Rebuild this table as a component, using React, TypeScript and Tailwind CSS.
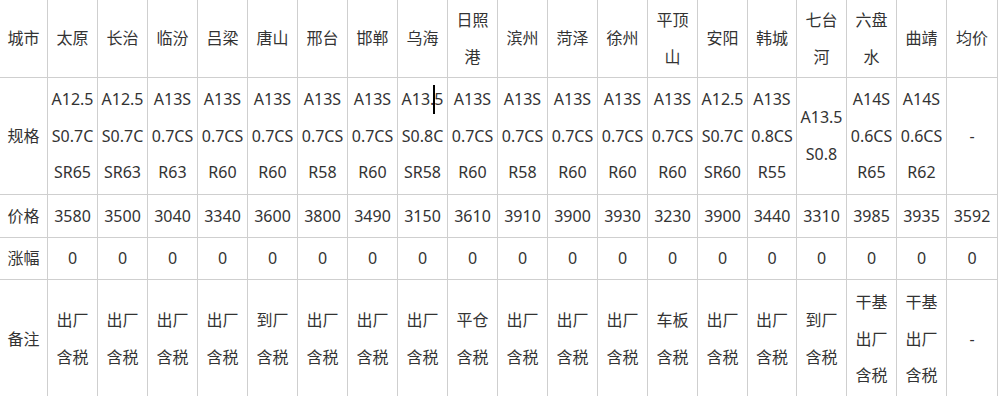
import React from "react";

type Cell = React.ReactNode;

const cities: string[][] = [
  ["城市"],
  ["太原"],
  ["长治"],
  ["临汾"],
  ["吕梁"],
  ["唐山"],
  ["邢台"],
  ["邯郸"],
  ["乌海"],
  ["日照", "港"],
  ["滨州"],
  ["菏泽"],
  ["徐州"],
  ["平顶", "山"],
  ["安阳"],
  ["韩城"],
  ["七台", "河"],
  ["六盘", "水"],
  ["曲靖"],
  ["均价"],
];

const Caret = () => (
  <span className="relative">
    <span className="absolute left-[-1px] top-[-3px] h-[29px] w-[2px] bg-black" />5
  </span>
);

const specs: Cell[][] = [
  ["规格"],
  ["A12.5", "S0.7C", "SR65"],
  ["A12.5", "S0.7C", "SR63"],
  ["A13S", "0.7CS", "R63"],
  ["A13S", "0.7CS", "R60"],
  ["A13S", "0.7CS", "R60"],
  ["A13S", "0.7CS", "R58"],
  ["A13S", "0.7CS", "R60"],
  [
    <>
      A13.
      <Caret />
    </>,
    "S0.8C",
    "SR58",
  ],
  ["A13S", "0.7CS", "R60"],
  ["A13S", "0.7CS", "R58"],
  ["A13S", "0.7CS", "R60"],
  ["A13S", "0.7CS", "R60"],
  ["A13S", "0.7CS", "R60"],
  ["A12.5", "S0.7C", "SR60"],
  ["A13S", "0.8CS", "R55"],
  ["A13.5", "S0.8"],
  ["A14S", "0.6CS", "R65"],
  ["A14S", "0.6CS", "R62"],
  ["-"],
];

const prices = [
  "价格", "3580", "3500", "3040", "3340", "3600", "3800", "3490", "3150", "3610",
  "3910", "3900", "3930", "3230", "3900", "3440", "3310", "3985", "3935", "3592",
];

const changes = ["涨幅", ...Array(18).fill("0"), "0"];

const notes: string[][] = [
  ["备注"],
  ["出厂", "含税"],
  ["出厂", "含税"],
  ["出厂", "含税"],
  ["出厂", "含税"],
  ["到厂", "含税"],
  ["出厂", "含税"],
  ["出厂", "含税"],
  ["出厂", "含税"],
  ["平仓", "含税"],
  ["出厂", "含税"],
  ["出厂", "含税"],
  ["出厂", "含税"],
  ["车板", "含税"],
  ["出厂", "含税"],
  ["出厂", "含税"],
  ["到厂", "含税"],
  ["干基", "出厂", "含税"],
  ["干基", "出厂", "含税"],
  ["-"],
];

function Lines({ lines }: { lines: Cell[] }) {
  return (
    <div className="flex h-full flex-col items-center justify-center bg-white px-[1px] text-center">
      {lines.map((l, i) => (
        <div key={i} className="whitespace-nowrap leading-[36.7px]">
          {l}
        </div>
      ))}
    </div>
  );
}

export default function App() {
  const rows: Cell[][][] = [
    cities,
    specs,
    prices.map((p) => [p]),
    changes.map((c) => [c]),
    notes,
  ];
  return (
    <div
      className="h-[396px] w-[1000px] overflow-hidden bg-white text-[16px] text-[#333]"
      style={{ fontFamily: '"Noto Sans", "Noto Sans CJK SC", sans-serif' }}
    >
      <div
        className="ml-[-1px] mt-[-1px] grid w-fit gap-px bg-[#cfcfcf] p-px"
        style={{
          gridTemplateColumns:
            "47px repeat(14, 49px) 48px 49px 49px 49px 50px",
          gridTemplateRows: "77px 116px 42px 41px 118px",
        }}
      >
        {rows.map((row, r) =>
          row.map((cell, c) => <Lines key={`${r}-${c}`} lines={cell} />)
        )}
      </div>
    </div>
  );
}
